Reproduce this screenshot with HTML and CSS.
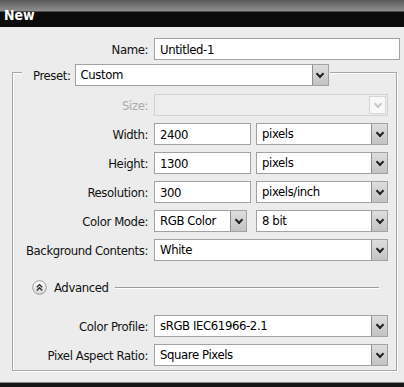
FILE: index.html
```html
<!DOCTYPE html>
<html lang="en">
<head>
  <meta charset="UTF-8" />
  <meta name="viewport" content="width=device-width, initial-scale=1.0"/>
  <title>New</title>
  <link rel="stylesheet" href="styles.css">
</head>
<body>
  <div class="titlebar">New</div>

  <div class="dialog">
    <div class="row">
      <label class="lbl">Name:</label>
      <input class="field" type="text" value="Untitled-1"/>
    </div>

    <div class="group">
      <div class="group-head">
        <label>Preset:</label>
        <div class="select preset"><span>Custom</span><i class="drop"></i></div>
      </div>

      <div class="row">
        <label class="lbl off">Size:</label>
        <div class="select disabled"><span></span><i class="drop"></i></div>
      </div>

      <div class="row">
        <label class="lbl">Width:</label>
        <input class="field num" type="text" value="2400"/>
        <div class="select unit"><span>pixels</span><i class="drop"></i></div>
      </div>

      <div class="row">
        <label class="lbl">Height:</label>
        <input class="field num" type="text" value="1300"/>
        <div class="select unit"><span>pixels</span><i class="drop"></i></div>
      </div>

      <div class="row">
        <label class="lbl">Resolution:</label>
        <input class="field num" type="text" value="300"/>
        <div class="select unit"><span>pixels/inch</span><i class="drop"></i></div>
      </div>

      <div class="row">
        <label class="lbl">Color Mode:</label>
        <div class="select mode"><span>RGB Color</span><i class="drop"></i></div>
        <div class="select unit"><span>8 bit</span><i class="drop"></i></div>
      </div>

      <div class="row">
        <label class="lbl">Background Contents:</label>
        <div class="select"><span>White</span><i class="drop"></i></div>
      </div>

      <div class="advanced">
        <svg width="15" height="15" viewBox="0 0 15 15">
          <defs>
            <linearGradient id="knob" x1="0" y1="0" x2="0" y2="1">
              <stop offset="0" stop-color="#ffffff"/>
              <stop offset="1" stop-color="#d6d6d6"/>
            </linearGradient>
          </defs>
          <circle cx="7.5" cy="7.5" r="6.8" fill="url(#knob)" stroke="#9a9a9a"/>
          <path d="M4.8 7.2 7.5 4.6 10.2 7.2M4.8 10.4 7.5 7.8 10.2 10.4" fill="none" stroke="#2a2a2a" stroke-width="1.4"/>
        </svg>
        <span>Advanced</span>
        <div class="rule"></div>
      </div>

      <div class="row">
        <label class="lbl">Color Profile:</label>
        <div class="select"><span>sRGB IEC61966-2.1</span><i class="drop"></i></div>
      </div>

      <div class="row">
        <label class="lbl">Pixel Aspect Ratio:</label>
        <div class="select"><span>Square Pixels</span><i class="drop"></i></div>
      </div>
    </div>
  </div>

  <div class="bottom"></div>
</body>
</html>
```

FILE: styles.css
```css
body {
  margin: 0;
  width: 404px;
  height: 387px;
  overflow: hidden;
  background: #ececec;
  color: #111;
  font-family: "DejaVu Sans Condensed", "Liberation Sans", sans-serif;
  font-size: 13px;
  letter-spacing: -0.4px;
}

.titlebar {
  height: 27px;
  box-sizing: border-box;
  padding: 7px 0 0 4px;
  line-height: 16px;
  font-size: 14px;
  font-weight: bold;
  letter-spacing: 0;
  color: #fff;
  background: linear-gradient(#5a5a5a 0, #8e8e8e 11px, #0b0b0b 12px, #0b0b0b 27px);
}

.dialog {
  padding: 11px 4px 0 12px;
}

.row {
  display: flex;
  align-items: center;
  height: 22px;
}

.lbl {
  width: 136px;
  margin-right: 6px;
  text-align: right;
  flex-shrink: 0;
}
.group .lbl {
  width: 135px;
}
.lbl.off {
  color: #ababab;
}

.field {
  flex: 1;
  min-width: 0;
  height: 22px;
  box-sizing: border-box;
  margin: 0;
  padding: 0 5px;
  border: 1px solid #a2a2a2;
  background: #fff;
  color: #000;
  font: inherit;
  letter-spacing: inherit;
  outline: none;
}
.field.num {
  flex: none;
  width: 97px;
}

.select {
  flex: 1;
  display: flex;
  height: 22px;
  box-sizing: border-box;
  border: 1px solid #a2a2a2;
  background: #fff;
  color: #000;
}
.select span {
  flex: 1;
  padding-left: 5px;
  line-height: 20px;
  white-space: nowrap;
  overflow: hidden;
}
.select.preset {
  flex: none;
  width: 254px;
}
.select.unit {
  flex: none;
  width: 132px;
  margin-left: auto;
}
.select.mode {
  flex: none;
  width: 93px;
}

.drop {
  width: 15px;
  display: flex;
  align-items: center;
  justify-content: center;
  border-left: 1px solid #8e8e8e;
  background: linear-gradient(#dedede, #c3c3c3);
}
.drop::after {
  content: "";
  width: 4px;
  height: 4px;
  margin-top: -3px;
  border-right: 2px solid #222;
  border-bottom: 2px solid #222;
  transform: rotate(45deg);
}

.select.disabled {
  border-color: #d2d2d2;
  background: #ededed;
}
.select.disabled .drop {
  margin: 1px;
  border: 1px solid #d6d6d6;
  background: #f9f9f9;
}
.select.disabled .drop::after {
  border-color: #c8c8c8;
}

.group {
  display: flex;
  flex-direction: column;
  gap: 7px;
  margin: 12px 3px 0 0;
  padding: 0 8px 4px 0;
  border: 1px solid #a6a6a6;
  box-shadow: inset 1px 1px #fff, 1px 1px #fff;
}

.group-head {
  align-self: flex-start;
  display: flex;
  align-items: center;
  gap: 4px;
  margin: -9px 0 1px 9px;
  padding: 0 1px 0 11px;
  background: #ececec;
}

.advanced {
  display: flex;
  align-items: center;
  height: 22px;
  margin: 8px 0 10px;
  padding-left: 19px;
}
.advanced svg {
  margin-right: 7px;
}
.rule {
  flex: 1;
  height: 1px;
  margin: 0 9px 0 6px;
  background: #9c9c9c;
  box-shadow: 0 1px #fff;
}

.bottom {
  margin-top: 11px;
  height: 5px;
  border-top: 1px solid #8a8a8a;
  background: #161616;
}
```
